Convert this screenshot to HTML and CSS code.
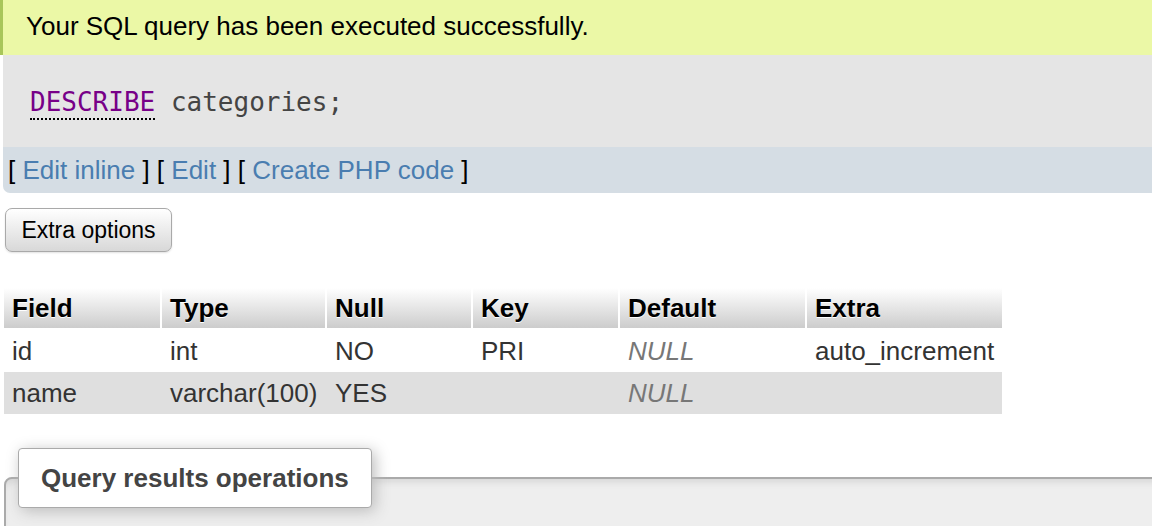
FILE: index.html
```html
<!DOCTYPE html>
<html>
<head>
<meta charset="utf-8">
<link rel="stylesheet" href="styles.css">
</head>
<body>
<div class="success">Your SQL query has been executed successfully.</div>
<div class="sqlbox"><code><span class="kw">DESCRIBE</span> categories;</code></div>
<div class="tools">[ <a href="#">Edit inline</a> ] [ <a href="#">Edit</a> ] [ <a href="#">Create PHP code</a> ]</div>
<button class="btn" type="button">Extra options</button>
<table class="data">
  <thead>
    <tr><th class="c1">Field</th><th class="c2">Type</th><th class="c3">Null</th><th class="c4">Key</th><th class="c5">Default</th><th class="c6">Extra</th></tr>
  </thead>
  <tbody>
    <tr class="odd"><td>id</td><td>int</td><td>NO</td><td>PRI</td><td><i class="null">NULL</i></td><td>auto_increment</td></tr>
    <tr class="even"><td>name</td><td>varchar(100)</td><td>YES</td><td></td><td><i class="null">NULL</i></td><td></td></tr>
  </tbody>
</table>
<fieldset class="ops">
  <legend>Query results operations</legend>
</fieldset>
</body>
</html>
```
FILE: styles.css
```css
html, body {
  margin: 0;
  padding: 0;
  background: #fff;
  font-family: "Liberation Sans", Arial, sans-serif;
  overflow: hidden;
}
.success {
  height: 55px;
  line-height: 52px;
  box-sizing: border-box;
  background: #ebf8a6;
  border-left: 3px solid #a8c65a;
  padding-left: 23px;
  font-size: 26px;
  color: #000;
}
.sqlbox {
  margin-left: 3px;
  height: 92px;
  background: #e5e5e5;
  display: flex;
  align-items: center;
  padding-left: 27px;
  padding-top: 2px;
  box-sizing: border-box;
}
.sqlbox code {
  font-family: "DejaVu Sans Mono", monospace;
  font-size: 26px;
  color: #444;
}
.kw {
  color: #770088;
  border-bottom: 2px dotted #000;
  padding-bottom: 1px;
}
.tools {
  margin-left: 3px;
  height: 46px;
  background: #d5dde4;
  border-bottom-left-radius: 7px;
  padding-left: 5px;
  line-height: 46px;
  font-size: 26px;
  color: #000;
}
.tools a {
  color: #4a7db0;
  text-decoration: none;
}
.btn {
  display: block;
  margin: 15px 0 0 5px;
  width: 167px;
  height: 44px;
  border: 1px solid #a9a9a9;
  border-radius: 7px;
  background: linear-gradient(#ffffff, #d8d8d8);
  box-shadow: 0 1px 2px rgba(0,0,0,0.12);
  font-family: "Liberation Sans", Arial, sans-serif;
  font-size: 23px;
  color: #000;
  padding: 0;
}
.data {
  margin: 36px 0 0 4px;
  border-collapse: separate;
  border-spacing: 0;
  font-size: 26px;
}
.data th {
  height: 42px;
  padding: 0 8px;
  text-align: left;
  font-weight: bold;
  color: #000;
  text-shadow: 0 1px 0 #fff;
  background: linear-gradient(#ffffff, #cccccc);
  background-clip: padding-box;
  border-right: 2px solid #fff;
  border-bottom: 2px solid #fff;
  box-sizing: border-box;
}
.data th.c6 { border-right: 0; }
.data td {
  height: 42px;
  padding: 0 8px;
  color: #333;
  box-sizing: border-box;
  white-space: nowrap;
}
.c1 { width: 158px; }
.c2 { width: 165px; }
.c3 { width: 146px; }
.c4 { width: 147px; }
.c5 { width: 187px; }
.c6 { width: 194px; }
.even td { background: #dfdfdf; }
.null { color: #777; }
.ops {
  margin: 34px -20px 0 4px;
  padding: 0;
  height: 120px;
  border: 2px solid #aaa;
  border-top-left-radius: 8px;
  background: #eee;
  box-shadow: inset 0 6px 8px -4px rgba(0,0,0,0.12);
}
.ops legend {
  margin-left: 12px;
  padding: 0 22px;
  height: 60px;
  line-height: 58px;
  box-sizing: border-box;
  width: 354px;
  background: #fff;
  border: 1px solid #aaa;
  border-radius: 4px;
  box-shadow: 3px 3px 15px #bbb;
  font-weight: bold;
  font-size: 26px;
  color: #444;
}
```
